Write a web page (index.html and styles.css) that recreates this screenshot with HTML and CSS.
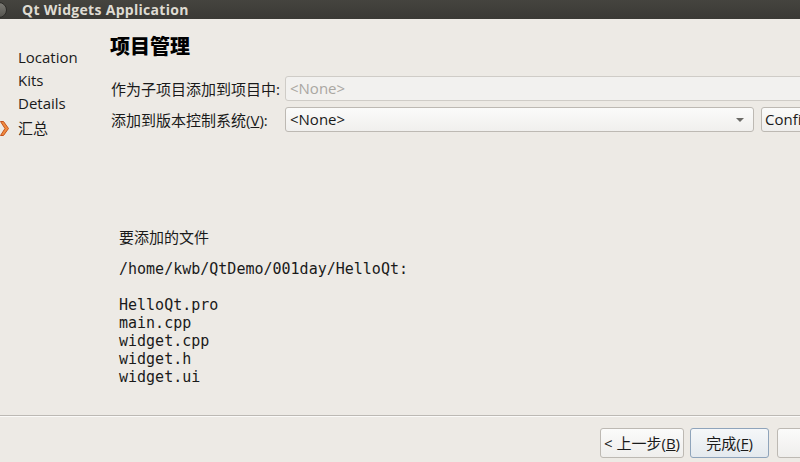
FILE: index.html
```html
<!DOCTYPE html>
<html lang="zh">
<head>
<meta charset="utf-8">
<link rel="stylesheet" href="styles.css">
</head>
<body>
<div class="window">
  <div class="titlebar">
    <span class="winbtn"></span>
    <span class="title">Qt Widgets Application</span>
  </div>
  <div class="main">
    <nav class="steps">
      <div class="step">Location</div>
      <div class="step">Kits</div>
      <div class="step">Details</div>
      <div class="step current"><svg class="arrow" width="9" height="15" viewBox="0 0 9 15"><path d="M0.5 0.5 L3.5 0.5 L8.5 7.5 L3.5 14.5 L0.5 14.5 L5 7.5 Z" fill="#f08b3e" stroke="#c4521e" stroke-width="1" stroke-linejoin="round"/></svg>汇总</div>
    </nav>
    <section class="page">
      <h1 class="heading">项目管理</h1>
      <div class="form">
        <div class="row">
          <label class="lbl">作为子项目添加到项目中:</label>
          <div class="field disabled">&lt;None&gt;</div>
        </div>
        <div class="row">
          <label class="lbl">添加到版本控制系统(<u>V</u>):</label>
          <div class="combo">&lt;None&gt;<span class="caret"></span></div>
          <div class="btn config">Configure...</div>
        </div>
      </div>
      <div class="files">
        <div class="files-title">要添加的文件</div>
        <pre class="filelist">/home/kwb/QtDemo/001day/HelloQt:

HelloQt.pro
main.cpp
widget.cpp
widget.h
widget.ui</pre>
      </div>
    </section>
  </div>
  <div class="footer">
    <div class="btn nav back">&lt; 上一步(<u>B</u>)</div>
    <div class="btn nav primary">完成(<u>F</u>)</div>
    <div class="btn nav cancel"><span class="cancel-text">取消</span></div>
  </div>
</div>
</body>
</html>
```
FILE: styles.css
```css
* { box-sizing: border-box; }
html, body { margin: 0; padding: 0; }
body {
  width: 800px;
  height: 462px;
  overflow: hidden;
  background: #edeae5;
  font-family: "Open Sans", "Noto Sans CJK SC", sans-serif;
  font-size: 15px;
  color: #1a1a1a;
}
.window { width: 800px; height: 462px; display: flex; flex-direction: column; overflow: hidden; }
.titlebar {
  height: 19px;
  flex: none;
  background: linear-gradient(#45443f, #3a3935);
  display: flex;
  align-items: center;
  color: #dfdbd2;
  font-weight: bold;
  font-size: 14px;
}
.winbtn {
  width: 16px; height: 16px; border-radius: 50%;
  margin-left: -9px;
  background: linear-gradient(#7b7a74, #55544f);
  border: 1px solid #2c2b28;
}
.title { margin-left: 15px; letter-spacing: 0.3px; }
.main { flex: 1; display: flex; overflow: hidden; }
.steps { width: 110px; flex: none; padding-top: 27px; }
.step { height: 23px; line-height: 23px; padding-left: 18px; position: relative; }
.step.current { margin-top: 2px; }
.arrow { position: absolute; left: 0; top: 4px; }
.page { flex: 1; display: flex; flex-direction: column; min-width: 0; }
.heading { margin: 14px 0 0 0; font-size: 20px; font-weight: 900; height: 28px; line-height: 28px; letter-spacing: 0; color: #000; }
.form { margin-top: 15px; display: flex; flex-direction: column; gap: 6px; margin-right: -40px; }
.row { display: flex; align-items: center; height: 25px; }
.lbl { width: 175px; flex: none; padding-left: 1px; white-space: nowrap; }
.field {
  flex: 1; height: 25px; border: 1px solid #cfccc7; border-radius: 3px;
  background: #f2f1ef; color: #aaa7a2; padding-left: 4px; line-height: 23px;
}
.combo {
  width: 469px; flex: none; height: 25px; border: 1px solid #bdb9b3; border-radius: 3px;
  background: linear-gradient(#fbfbfa, #f0efed); padding-left: 4px; line-height: 23px; position: relative;
}
.caret {
  position: absolute; right: 9px; top: 10px;
  border-left: 4px solid transparent; border-right: 4px solid transparent; border-top: 4px solid #6b6a66;
}
.btn {
  height: 25px; border: 1px solid #bdb9b3; border-radius: 3px;
  background: linear-gradient(#fbfbfa, #efeeec); padding: 0 3px; line-height: 23px; white-space: nowrap; overflow: hidden;
}
.config { margin-left: 7px; width: 90px; flex: none; }
.files { margin-top: 95px; padding-left: 9px; }
.files-title { height: 20px; line-height: 20px; }
.filelist {
  margin: 13px 0 0 0;
  font-family: "DejaVu Sans Mono", monospace;
  font-size: 15px;
  line-height: 18px;
  color: #1a1a1a;
}
.footer {
  height: 47px; flex: none;
  border-top: 1px solid #bcb9b4;
  box-shadow: inset 0 1px 0 #fbfaf8;
  display: flex; align-items: flex-start;
  padding: 12px 0 0 600px;
}
.nav { height: 30px; line-height: 28px; text-align: center; padding: 0; flex: none; }
.back { width: 84px; }
.primary { width: 79px; margin-left: 6px; border-color: #8fa4bb; background: linear-gradient(#f5f7f9, #e4e9ee); }
.cancel { width: 90px; margin-left: 8px; text-align: left; }
.cancel-text { display: inline-block; margin-left: 40px; }
```
